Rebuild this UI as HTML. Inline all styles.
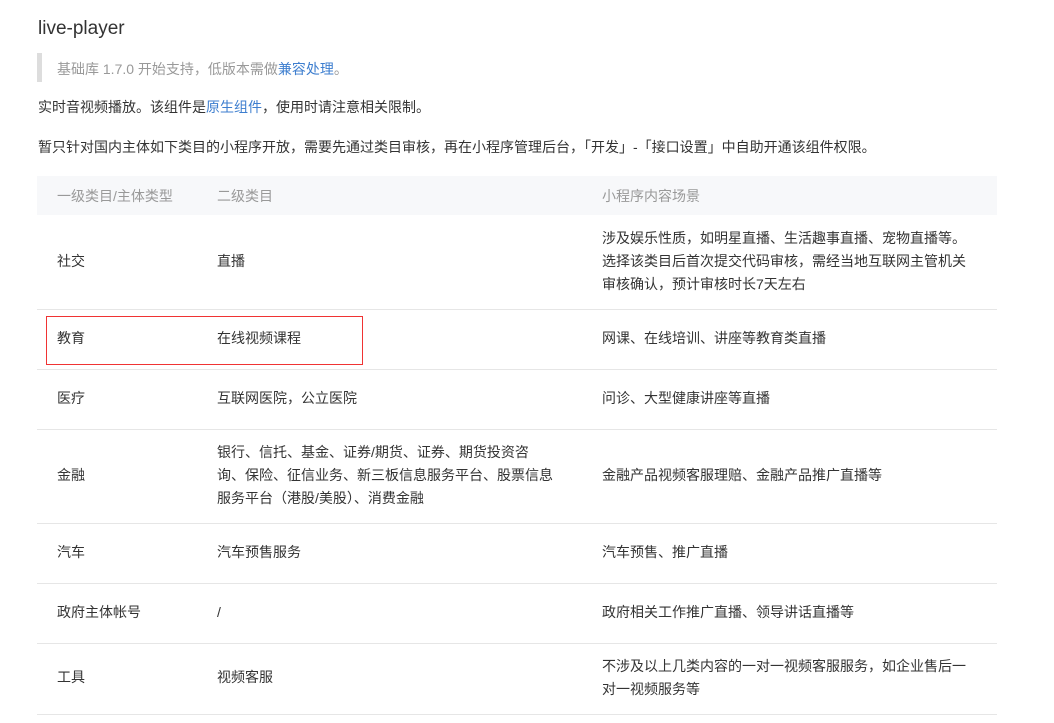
<!DOCTYPE html>
<html><head><meta charset="utf-8"><style>
body{margin:0;background:#fff;font-family:"Liberation Sans","Noto Sans CJK SC",sans-serif;color:#333;font-size:14px;}
.a{position:absolute;white-space:nowrap;}
.t{left:38px;top:18px;font-size:19px;color:#333;}
.bar{left:37px;top:53px;width:5px;height:29px;background:#ddd;}
.q{left:57px;top:59px;color:#999;}
a{color:#3d7ecf;text-decoration:none;}
.p1{left:38px;top:97px;}
.p2{left:38px;top:137px;}
.hd{left:37px;top:176px;width:960px;height:39px;background:#f7f8fa;}
.th{color:#999;top:186px;}
.row{position:absolute;left:37px;width:960px;border-bottom:1px solid #e6e6e6;}
.c{position:absolute;line-height:23px;}
.c1{left:20px}.c2{left:180px;width:380px;white-space:nowrap}.c3{left:565px;width:372px;white-space:normal}
.red{position:absolute;left:46px;top:316px;width:315px;height:47px;border:1px solid #f03333;}
</style></head><body>
<div class="a t">live-player</div>
<div class="a bar"></div>
<div class="a q">基础库 1.7.0 开始支持，低版本需做<a>兼容处理</a>。</div>
<div class="a p1">实时音视频播放。该组件是<a>原生组件</a>，使用时请注意相关限制。</div>
<div class="a p2">暂只针对国内主体如下类目的小程序开放，需要先通过类目审核，再在小程序管理后台，「开发」-「接口设置」中自助开通该组件权限。</div>
<div class="a hd"></div>
<div class="a th" style="left:57px">一级类目/主体类型</div>
<div class="a th" style="left:217px">二级类目</div>
<div class="a th" style="left:602px">小程序内容场景</div>

<div class="row" style="top:215px;height:94px">
<div class="c c1" style="top:35px">社交</div><div class="c c2" style="top:35px">直播</div>
<div class="c c3" style="top:12px">涉及娱乐性质，如明星直播、生活趣事直播、宠物直播等。选择该类目后首次提交代码审核，需经当地互联网主管机关审核确认，预计审核时长7天左右</div></div>
<div class="row" style="top:310px;height:59px">
<div class="c c1" style="top:17px">教育</div><div class="c c2" style="top:17px">在线视频课程</div><div class="c c3" style="top:17px">网课、在线培训、讲座等教育类直播</div></div>
<div class="row" style="top:370px;height:59px">
<div class="c c1" style="top:17px">医疗</div><div class="c c2" style="top:17px">互联网医院，公立医院</div><div class="c c3" style="top:17px">问诊、大型健康讲座等直播</div></div>
<div class="row" style="top:430px;height:93px">
<div class="c c1" style="top:34px">金融</div><div class="c c2" style="top:11px">银行、信托、基金、证券/期货、证券、期货投资咨<br>询、保险、征信业务、新三板信息服务平台、股票信息<br>服务平台（港股/美股）、消费金融</div><div class="c c3" style="top:34px">金融产品视频客服理赔、金融产品推广直播等</div></div>
<div class="row" style="top:524px;height:59px">
<div class="c c1" style="top:17px">汽车</div><div class="c c2" style="top:17px">汽车预售服务</div><div class="c c3" style="top:17px">汽车预售、推广直播</div></div>
<div class="row" style="top:584px;height:59px">
<div class="c c1" style="top:17px">政府主体帐号</div><div class="c c2" style="top:17px">/</div><div class="c c3" style="top:17px">政府相关工作推广直播、领导讲话直播等</div></div>
<div class="row" style="top:644px;height:70px">
<div class="c c1" style="top:22px">工具</div><div class="c c2" style="top:22px">视频客服</div><div class="c c3" style="top:11px">不涉及以上几类内容的一对一视频客服服务，如企业售后一对一视频服务等</div></div>
<div class="red"></div>
</body></html>
